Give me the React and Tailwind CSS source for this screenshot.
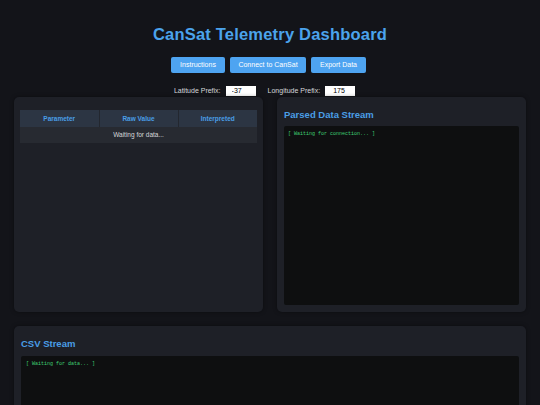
import React, { useState } from 'react';

export default function App() {
  const [latPrefix, setLatPrefix] = useState('-37');
  const [lonPrefix, setLonPrefix] = useState('175');

  const columns = ['Parameter', 'Raw Value', 'Interpreted'];

  return (
    <div className="min-h-screen w-[540px] h-[405px] overflow-hidden bg-[#131419] px-[14px] font-['Liberation_Sans',Arial,sans-serif]">
      {/* Header */}
      <h1 className="pt-[24px] text-center text-[16.5px] leading-[20px] font-bold text-[#4ba3ec] tracking-[0.2px]">
        CanSat Telemetry Dashboard
      </h1>

      <div className="mt-[13px] flex justify-center gap-[5px] pr-[3px]">
        <button className="h-[16px] w-[54px] rounded-[2px] bg-[#4ea4f1] text-[7px] text-white">Instructions</button>
        <button className="h-[16px] w-[76px] rounded-[2px] bg-[#4ea4f1] text-[7px] text-white">Connect to CanSat</button>
        <button className="h-[16px] w-[55px] rounded-[2px] bg-[#4ea4f1] text-[7px] text-white">Export Data</button>
      </div>

      <div className="mt-[13px] flex h-[10px] justify-center items-center pr-[11px] text-[7px] text-[#d4d6da]">
        <label className="flex items-center">
          Latitude Prefix:
          <input
            value={latPrefix}
            onChange={(e) => setLatPrefix(e.target.value)}
            className="ml-[5px] h-[10px] w-[30px] bg-white px-[6px] text-[7px] text-black outline-none"
          />
        </label>
        <label className="ml-[12px] flex items-center">
          Longitude Prefix:
          <input
            value={lonPrefix}
            onChange={(e) => setLonPrefix(e.target.value)}
            className="ml-[5px] h-[10px] w-[30px] bg-white px-[8px] text-[7px] text-black outline-none"
          />
        </label>
      </div>

      {/* Panels */}
      <div className="mt-[1px] grid grid-cols-2 gap-[14px]">
        <div className="h-[215px] rounded-[5px] bg-[#1e2027] shadow-[0_0_4px_rgba(0,0,0,0.4)] pl-[6px] pr-[6px] pt-[13px]">
          <table className="w-[237px] border-collapse text-[6.5px]">
            <thead>
              <tr className="h-[17px] bg-[#2c3543]">
                {columns.map((c, i) => (
                  <th
                    key={c}
                    className={`w-1/3 font-bold text-[#4a9ee6] ${i > 0 ? 'border-l border-[#23272f]' : ''}`}
                  >
                    {c}
                  </th>
                ))}
              </tr>
            </thead>
            <tbody>
              <tr className="h-[16px] bg-[#272a31]">
                <td colSpan={3} className="text-center text-[#d6d7da]">Waiting for data...</td>
              </tr>
            </tbody>
          </table>
        </div>

        <div className="flex h-[215px] flex-col rounded-[5px] bg-[#1e2027] shadow-[0_0_4px_rgba(0,0,0,0.4)] px-[7px] pt-[12px] pb-[7px]">
          <h2 className="text-[9.5px] leading-[12px] font-bold text-[#4a9ee6]">Parsed Data Stream</h2>
          <div className="mt-[5px] flex-1 rounded-[2px] bg-[#0e0f10] px-[4px] py-[4px] font-['Liberation_Mono','DejaVu_Sans_Mono',monospace] text-[5px] leading-[8px] text-[#3fcf74]">
            [ Waiting for connection... ]
          </div>
        </div>
      </div>

      <div className="mt-[14px] h-[120px] rounded-[5px] bg-[#1e2027] shadow-[0_0_4px_rgba(0,0,0,0.4)] px-[7px] pt-[12px]">
        <h2 className="text-[9.5px] leading-[12px] font-bold text-[#4a9ee6]">CSV Stream</h2>
        <div className="mt-[6px] h-[100px] rounded-[2px] bg-[#0e0f10] px-[5px] py-[4px] font-['Liberation_Mono','DejaVu_Sans_Mono',monospace] text-[5px] leading-[8px] text-[#3fcf74]">
          [ Waiting for data... ]
        </div>
      </div>
    </div>
  );
}
